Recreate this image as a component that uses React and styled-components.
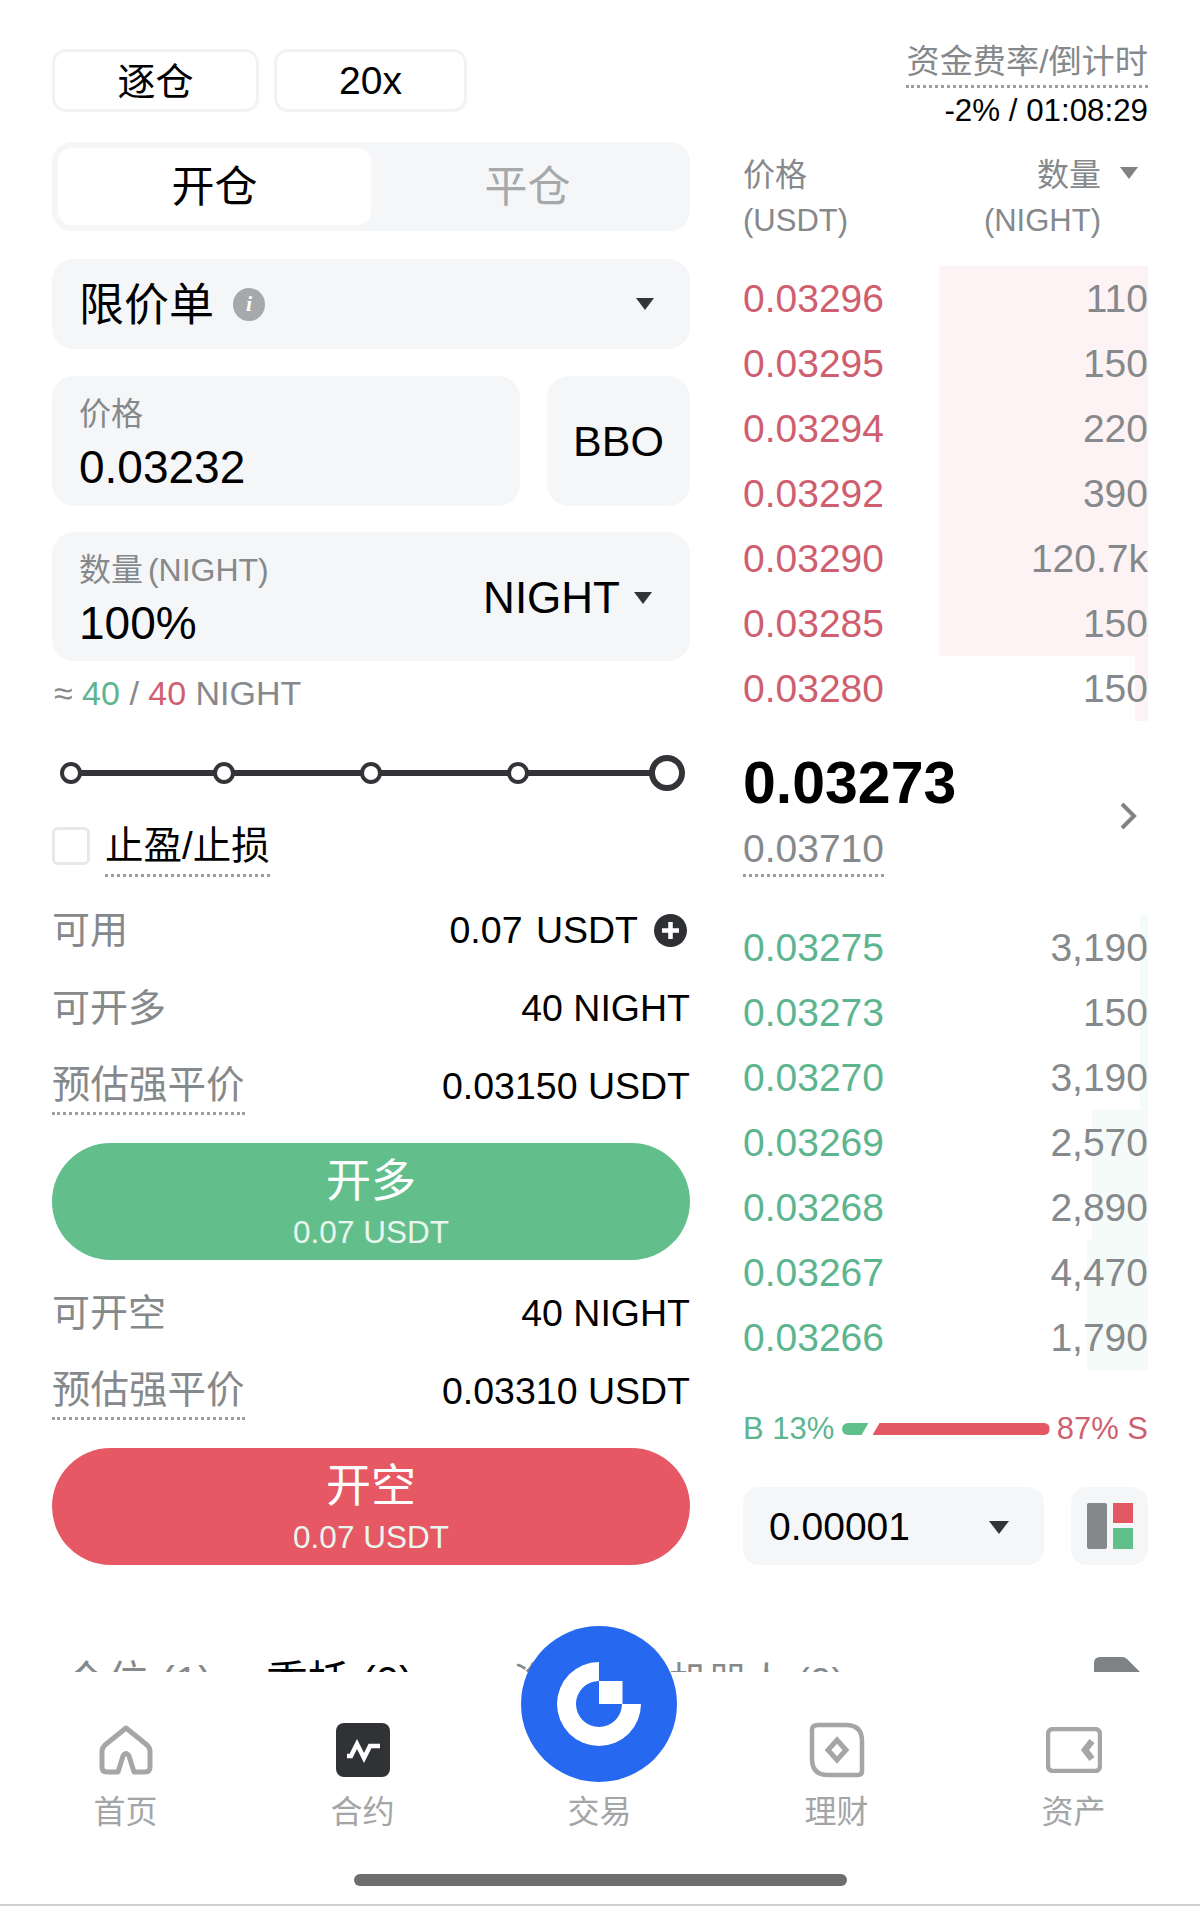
import React from 'react';
import styled, { createGlobalStyle } from 'styled-components';

const GRAY = '#86898b';
const RED = '#cf5f70';
const GREEN = '#5db58f';
const PANEL = '#f5f6f8';

const GlobalStyle = createGlobalStyle`
  html, body {
    margin: 0;
    padding: 0;
    background: #fff;
    font-family: "Liberation Sans", "Noto Sans CJK SC", sans-serif;
    color: #000;
  }
  * { box-sizing: border-box; }
`;

const Page = styled.div`
  width: 1200px;
  height: 1906px;
  overflow: hidden;
  display: flex;
  flex-direction: column;
  background: #fff;
`;

const Main = styled.div`
  height: 1655px;
  padding-left: 52px;
  display: flex;
  gap: 53px;
`;

const LeftColumn = styled.div`
  width: 638px;
  padding-top: 49px;
  display: flex;
  flex-direction: column;
`;

const RightColumn = styled.div`
  width: 405px;
  padding-top: 40px;
  display: flex;
  flex-direction: column;
`;

const TopButtons = styled.div`
  display: flex;
  gap: 15px;
`;

const OutlineButton = styled.div`
  width: ${p => p.$width}px;
  height: 63px;
  padding-bottom: ${p => p.$lift || 0}px;
  border: 3px solid #f0f2f3;
  border-radius: 14px;
  display: flex;
  align-items: center;
  justify-content: center;
  font-size: ${p => p.$size}px;
`;

const ModeTabs = styled.div`
  margin-top: 30px;
  height: 89px;
  padding: 6px;
  border-radius: 20px;
  background: ${PANEL};
  display: grid;
  grid-template-columns: 313px 1fr;
`;

const ModeTab = styled.div`
  padding-bottom: 7px;
  border-radius: 14px;
  display: flex;
  align-items: center;
  justify-content: center;
  font-size: 43px;
  background: ${p => (p.$active ? '#fff' : 'transparent')};
  color: ${p => (p.$active ? '#000' : '#a6a8aa')};
`;

const OrderType = styled.div`
  margin-top: 28px;
  height: 90px;
  padding: 0 36px 0 27px;
  border-radius: 22px;
  background: ${PANEL};
  display: flex;
  align-items: center;
  font-size: 45px;
`;

const OrderTypeName = styled.span`
  margin-bottom: 5px;
`;

const InfoDot = styled.span`
  width: 32px;
  height: 33px;
  margin-left: 19px;
  border-radius: 50%;
  background: #a6a8aa;
  color: #fff;
  font: italic 700 22px "Liberation Serif", serif;
  display: flex;
  align-items: center;
  justify-content: center;
`;

const Caret = styled.span`
  width: 0;
  height: 0;
  margin-left: ${p => p.$left || 0};
  border-left: ${p => p.$size || 9}px solid transparent;
  border-right: ${p => p.$size || 9}px solid transparent;
  border-top: ${p => (p.$size || 9) + 3}px solid ${p => p.$color || '#333438'};
`;

const PriceRow = styled.div`
  margin-top: 27px;
  height: 130px;
  display: flex;
  gap: 27px;
`;

const Field = styled.div`
  flex: ${p => (p.$fixed ? 'none' : 1)};
  height: ${p => p.$height || 130}px;
  margin-top: ${p => p.$top || 0}px;
  padding: 18px 38px 0 27px;
  border-radius: 22px;
  background: ${PANEL};
  display: flex;
  justify-content: space-between;
`;

const FieldText = styled.div`
  display: flex;
  flex-direction: column;
  gap: 5px;
`;

const FieldLabel = styled.div`
  height: 40px;
  line-height: 40px;
  font-size: 32px;
  word-spacing: -4px;
  color: ${GRAY};
`;

const FieldValue = styled.div`
  height: 56px;
  line-height: 56px;
  font-size: 46px;
`;

const UnitPicker = styled.div`
  height: 96px;
  display: flex;
  align-items: center;
  font-size: 44px;
`;

const BboButton = styled.div`
  width: 143px;
  border-radius: 22px;
  background: ${PANEL};
  display: flex;
  align-items: center;
  justify-content: center;
  font-size: 43px;
`;

const Estimate = styled.div`
  margin-top: 12px;
  padding-left: 2px;
  height: 40px;
  line-height: 40px;
  font-size: 34px;
  color: ${GRAY};
`;

const Tone = styled.span`
  color: ${p => (p.$tone === 'red' ? RED : p.$tone === 'green' ? GREEN : 'inherit')};
`;

const Slider = styled.div`
  position: relative;
  margin-top: 42px;
  margin-left: 8px;
  height: 36px;
  display: flex;
  align-items: center;
`;

const SliderTrack = styled.div`
  position: absolute;
  left: 8px;
  right: 30px;
  top: 15px;
  height: 6px;
  background: #333438;
`;

const SliderStop = styled.div`
  position: relative;
  flex: none;
  width: ${p => (p.$big ? 36 : 22)}px;
  height: ${p => (p.$big ? 36 : 22)}px;
  margin-left: ${p => p.$gap}px;
  border: ${p => (p.$big ? 6 : 4)}px solid #333438;
  border-radius: 50%;
  background: #fff;
`;

const StopLossRow = styled.div`
  margin-top: 36px;
  height: 38px;
  display: flex;
  align-items: center;
  gap: 15px;
`;

const Checkbox = styled.div`
  width: 38px;
  height: 38px;
  border: 3px solid #e7e8e9;
  border-radius: 6px;
`;

const Dotted = styled.span`
  display: inline-block;
  margin-top: ${p => p.$top || 0}px;
  font-size: ${p => p.$size || 38.5}px;
  line-height: ${p => p.$line || 44}px;
  padding-bottom: ${p => p.$pad ?? 5}px;
  color: ${p => p.$color || 'inherit'};
  border-bottom: 3px dotted #9b9d9f;
`;

const InfoRows = styled.div`
  margin-top: ${p => p.$top}px;
  display: flex;
  flex-direction: column;
  gap: 28px;
`;

const InfoRow = styled.div`
  height: 50px;
  display: flex;
  align-items: center;
  justify-content: space-between;
`;

const InfoLabel = styled.span`
  padding-bottom: 8px;
  font-size: 38px;
  color: ${GRAY};
`;

const InfoValue = styled.span`
  display: flex;
  align-items: center;
  font-size: 37.5px;
  white-space: pre;
`;

const WideSpaced = styled.span`
  word-spacing: 3px;
`;

const PlusDot = styled.span`
  width: 33px;
  height: 33px;
  margin: 0 3px 0 16px;
  border-radius: 50%;
  background: #2e3033;
  display: flex;
`;

const ActionButton = styled.div`
  margin-top: 32px;
  height: 117px;
  border-radius: 59px;
  background: ${p => p.$color};
  color: #fff;
  display: flex;
  flex-direction: column;
  align-items: center;
  padding-top: 14px;
`;

const ActionTitle = styled.div`
  font-size: 45px;
  line-height: 50px;
`;

const ActionAmount = styled.div`
  margin-top: 5px;
  font-size: 31.5px;
  line-height: 40px;
  color: #e8f6ef;
`;

const FundingLabel = styled.div`
  align-self: flex-end;
`;

const FundingValue = styled.div`
  align-self: flex-end;
  height: 40px;
  line-height: 40px;
  margin-top: 3px;
  font-size: 31.3px;
`;

const BookHeader = styled.div`
  margin-top: 22px;
  height: 88px;
  display: flex;
  justify-content: space-between;
  font-size: 32px;
  line-height: 45px;
  color: ${GRAY};
`;

const HeaderUnit = styled.span`
  font-size: 31px;
`;

const HeaderRight = styled.div`
  display: flex;
  gap: 19px;
  padding-right: 10px;
  text-align: right;
`;

const HeaderCaret = styled.div`
  padding-top: 22px;
`;

const BookRows = styled.div`
  margin-top: ${p => p.$top}px;
`;

const BookRow = styled.div`
  height: 65px;
  padding-top: 1px;
  display: flex;
  align-items: center;
  justify-content: space-between;
  font-size: 39px;
  color: ${GRAY};
  background: linear-gradient(to left, ${p => p.$bar} ${p => p.$depth}px, transparent ${p => p.$depth}px);
`;

const MidBlock = styled.div`
  margin-top: 27px;
  display: flex;
  justify-content: space-between;
  align-items: center;
`;

const MidPrice = styled.div`
  height: 70px;
  line-height: 70px;
  font-size: 59px;
  font-weight: 700;
  margin-bottom: 9px;
`;

const Chevron = styled.svg`
  width: 18px;
  height: 28px;
  margin: 7px 11px 0 0;
`;

const RatioRow = styled.div`
  margin-top: 39px;
  height: 40px;
  display: flex;
  align-items: center;
  justify-content: space-between;
  font-size: 31px;
`;

const RatioBar = styled.div`
  display: flex;
  gap: 4px;
`;

const RatioBuy = styled.div`
  width: 27px;
  height: 12px;
  background: #60bf8a;
  border-radius: 6px 0 0 6px;
  clip-path: polygon(0 0, 100% 0, calc(100% - 7px) 100%, 0 100%);
`;

const RatioSell = styled.div`
  width: 177px;
  height: 12px;
  background: #e45864;
  border-radius: 0 6px 6px 0;
  clip-path: polygon(7px 0, 100% 0, 100% 100%, 0 100%);
`;

const BookFooter = styled.div`
  margin-top: 38px;
  display: flex;
  justify-content: space-between;
`;

const PrecisionSelect = styled.div`
  width: 301px;
  height: 78px;
  padding: 2px 35px 0 26px;
  border-radius: 16px;
  background: ${PANEL};
  display: flex;
  align-items: center;
  justify-content: space-between;
  font-size: 39px;
`;

const LayoutButton = styled.div`
  width: 77px;
  height: 78px;
  border-radius: 16px;
  background: ${PANEL};
  display: flex;
  align-items: center;
  justify-content: center;
`;

const OrderTabs = styled.div`
  height: 17px;
  overflow: hidden;
  padding: 0 60px 0 65px;
  display: flex;
  line-height: 54px;
  white-space: pre;
`;

const OrderTab = styled.div`
  margin-right: ${p => p.$after}px;
  font-size: ${p => p.$size || 42}px;
  color: ${p => (p.$active ? '#000' : GRAY)};
`;

const DocIcon = styled.svg`
  width: 46px;
  height: 15px;
  margin: 2px 0 0 auto;
`;

const Nav = styled.nav`
  height: 234px;
  padding: 50px 8px 0 7px;
  background: #fff;
  border-bottom: 2px solid #d0d0d0;
`;

const NavItems = styled.div`
  display: grid;
  grid-template-columns: repeat(5, 237px);
`;

const NavItem = styled.div`
  position: relative;
  display: flex;
  flex-direction: column;
  align-items: center;
`;

const NavIcon = styled.div`
  width: 56px;
  height: 56px;
  display: flex;
  align-items: center;
  justify-content: center;
`;

const NavLabel = styled.div`
  margin-top: 12px;
  height: 44px;
  line-height: 44px;
  font-size: 32px;
  color: #a3a5a7;
`;

const TradeLogo = styled.svg`
  position: absolute;
  top: -96px;
  left: 40px;
  width: 156px;
  height: 156px;
`;

const HomeIndicator = styled.div`
  width: 493px;
  height: 12px;
  margin: 40px 0 0 347px;
  border-radius: 6px;
  background: #6e6e6e;
`;

const asks = [
  ['0.03296', '110', 209],
  ['0.03295', '150', 209],
  ['0.03294', '220', 209],
  ['0.03292', '390', 209],
  ['0.03290', '120.7k', 209],
  ['0.03285', '150', 209],
  ['0.03280', '150', 13],
];

const bids = [
  ['0.03275', '3,190', 8],
  ['0.03273', '150', 8],
  ['0.03270', '3,190', 8],
  ['0.03269', '2,570', 56],
  ['0.03268', '2,890', 56],
  ['0.03267', '4,470', 61],
  ['0.03266', '1,790', 61],
];

const stops = [
  { gap: 0 },
  { gap: 131 },
  { gap: 125 },
  { gap: 125 },
  { gap: 120, big: true },
];

const HomeGlyph = () => (
  <svg width="54" height="50" viewBox="0 0 54 50" fill="none" stroke="#a4a6a8" strokeWidth="5" strokeLinejoin="round">
    <path d="M27 3 L48 20 Q51 23 51 26 V42 Q51 47 46 47 H35 L30 31 Q27 26 24 31 L19 47 H8 Q3 47 3 42 V26 Q3 23 6 20 Z" />
  </svg>
);

const ContractGlyph = () => (
  <svg width="54" height="54" viewBox="0 0 54 54">
    <rect width="54" height="54" rx="8" fill="#313236" />
    <path d="M11 33 H15 L21 21 L28 35 L34 23 H44" fill="none" stroke="#fff" strokeWidth="4.5" />
  </svg>
);

const WealthGlyph = () => (
  <svg width="56" height="56" viewBox="0 0 56 56" fill="none" stroke="#a4a6a8" strokeWidth="4.5">
    <path d="M9 3 H37 Q53 3 53 19 V49 Q53 53 49 53 H19 Q3 53 3 37 V8 Q3 3 9 3 Z" />
    <path d="M28 18 L37 28 L28 38 L19 28 Z" strokeWidth="5" />
  </svg>
);

const AssetGlyph = () => (
  <svg width="56" height="46" viewBox="0 0 56 46" fill="none" stroke="#a4a6a8" strokeWidth="4.5">
    <rect x="2" y="2" width="52" height="42" rx="5" />
    <path d="M46 14 L39 23 L46 32" strokeWidth="6.5" />
  </svg>
);

const LayoutGlyph = () => (
  <svg width="46" height="46" viewBox="0 0 46 46">
    <rect x="0" y="0" width="20" height="46" rx="2" fill="#85888a" />
    <rect x="26" y="0" width="20" height="20" fill="#e45864" />
    <rect x="26" y="25" width="20" height="21" fill="#60bf8a" />
  </svg>
);

function LiquidationRows({ top, rows }) {
  return (
    <InfoRows $top={top}>
      {rows.map(([label, value]) => (
        <InfoRow key={label}>
          {label === '预估强平价'
            ? <Dotted $color={GRAY} $top={5}>{label}</Dotted>
            : <InfoLabel>{label}</InfoLabel>}
          <InfoValue>{value}</InfoValue>
        </InfoRow>
      ))}
    </InfoRows>
  );
}

export default function App() {
  return (
    <Page>
      <GlobalStyle />
      <Main>
        <LeftColumn>
          <TopButtons>
            <OutlineButton $width={207} $size={38} $lift={5}>逐仓</OutlineButton>
            <OutlineButton $width={193} $size={39}>20x</OutlineButton>
          </TopButtons>

          <ModeTabs>
            <ModeTab $active>开仓</ModeTab>
            <ModeTab>平仓</ModeTab>
          </ModeTabs>

          <OrderType>
            <OrderTypeName>限价单</OrderTypeName>
            <InfoDot>i</InfoDot>
            <Caret $left="auto" />
          </OrderType>

          <PriceRow>
            <Field>
              <FieldText>
                <FieldLabel>价格</FieldLabel>
                <FieldValue>0.03232</FieldValue>
              </FieldText>
            </Field>
            <BboButton>BBO</BboButton>
          </PriceRow>

          <Field $top={26} $height={129} $fixed>
            <FieldText>
              <FieldLabel>数量 (NIGHT)</FieldLabel>
              <FieldValue>100%</FieldValue>
            </FieldText>
            <UnitPicker>
              NIGHT
              <Caret $left="14px" />
            </UnitPicker>
          </Field>

          <Estimate>
            ≈ <Tone $tone="green">40</Tone> / <Tone $tone="red">40</Tone> NIGHT
          </Estimate>

          <Slider>
            <SliderTrack />
            {stops.map((stop, i) => (
              <SliderStop key={i} $gap={stop.gap} $big={stop.big} />
            ))}
          </Slider>

          <StopLossRow>
            <Checkbox />
            <Dotted $pad={6} $top={9}>止盈/止损</Dotted>
          </StopLossRow>

          <InfoRows $top={40}>
            <InfoRow>
              <InfoLabel>可用</InfoLabel>
              <InfoValue>
                <WideSpaced>0.07 USDT</WideSpaced>
                <PlusDot>
                  <svg width="33" height="33" viewBox="0 0 33 33">
                    <path d="M16.5 8 V25 M8 16.5 H25" stroke="#fff" strokeWidth="4.5" />
                  </svg>
                </PlusDot>
              </InfoValue>
            </InfoRow>
            <InfoRow>
              <InfoLabel>可开多</InfoLabel>
              <InfoValue>40 NIGHT</InfoValue>
            </InfoRow>
            <InfoRow>
              <Dotted $color={GRAY} $top={5}>预估强平价</Dotted>
              <InfoValue>0.03150 USDT</InfoValue>
            </InfoRow>
          </InfoRows>

          <ActionButton $color="#62bf8b">
            <ActionTitle>开多</ActionTitle>
            <ActionAmount>0.07 USDT</ActionAmount>
          </ActionButton>

          <LiquidationRows
            top={28}
            rows={[['可开空', '40 NIGHT'], ['预估强平价', '0.03310 USDT']]}
          />

          <ActionButton $color="#e55864">
            <ActionTitle>开空</ActionTitle>
            <ActionAmount>0.07 USDT</ActionAmount>
          </ActionButton>
        </LeftColumn>

        <RightColumn>
          <FundingLabel>
            <Dotted $size={33.2} $pad={1} $color={GRAY}>资金费率/倒计时</Dotted>
          </FundingLabel>
          <FundingValue>-2% / 01:08:29</FundingValue>

          <BookHeader>
            <div>价格<br /><HeaderUnit>(USDT)</HeaderUnit></div>
            <HeaderRight>
              <div>数量<br /><HeaderUnit>(NIGHT)</HeaderUnit></div>
              <HeaderCaret><Caret $size={9} $color="#808284" /></HeaderCaret>
            </HeaderRight>
          </BookHeader>

          <BookRows $top={25}>
            {asks.map(([price, size, depth]) => (
              <BookRow key={price} $bar="#fdf3f4" $depth={depth}>
                <Tone $tone="red">{price}</Tone>
                <span>{size}</span>
              </BookRow>
            ))}
          </BookRows>

          <MidBlock>
            <div>
              <MidPrice>0.03273</MidPrice>
              <Dotted $pad={3} $size={39} $color={GRAY}>0.03710</Dotted>
            </div>
            <Chevron viewBox="0 0 18 28" fill="none" stroke="#808284" strokeWidth="4">
              <path d="M3 2 L15 14 L3 26" />
            </Chevron>
          </MidBlock>

          <BookRows $top={38}>
            {bids.map(([price, size, depth]) => (
              <BookRow key={price} $bar="#f5fbf8" $depth={depth}>
                <Tone $tone="green">{price}</Tone>
                <span>{size}</span>
              </BookRow>
            ))}
          </BookRows>

          <RatioRow>
            <Tone $tone="green">B 13%</Tone>
            <RatioBar>
              <RatioBuy />
              <RatioSell />
            </RatioBar>
            <Tone $tone="red">87% S</Tone>
          </RatioRow>

          <BookFooter>
            <PrecisionSelect>
              0.00001
              <Caret $size={10} />
            </PrecisionSelect>
            <LayoutButton><LayoutGlyph /></LayoutButton>
          </BookFooter>
        </RightColumn>
      </Main>

      <OrderTabs>
        <OrderTab $after={54}>仓位 (1)</OrderTab>
        <OrderTab $active $after={100}>委托 (0)</OrderTab>
        <OrderTab $after={0} $size={39}>资金跟单机器人 (0)</OrderTab>
        <DocIcon viewBox="0 0 46 15">
          <path d="M0 15 V6 Q0 0 6 0 H28 Q31 0 33 2 L46 15 Z" fill="#7f8285" />
        </DocIcon>
      </OrderTabs>

      <Nav>
        <NavItems>
          <NavItem>
            <NavIcon><HomeGlyph /></NavIcon>
            <NavLabel>首页</NavLabel>
          </NavItem>
          <NavItem>
            <NavIcon><ContractGlyph /></NavIcon>
            <NavLabel>合约</NavLabel>
          </NavItem>
          <NavItem>
            <TradeLogo viewBox="0 0 156 156">
              <circle cx="78" cy="78" r="78" fill="#2768f0" />
              <path d="M78 36 A42 42 0 1 0 120 78 H101 A23 23 0 1 1 78 55 Z" fill="#fff" />
              <rect x="78" y="55" width="23.5" height="23" fill="#fff" />
            </TradeLogo>
            <NavIcon />
            <NavLabel>交易</NavLabel>
          </NavItem>
          <NavItem>
            <NavIcon><WealthGlyph /></NavIcon>
            <NavLabel>理财</NavLabel>
          </NavItem>
          <NavItem>
            <NavIcon><AssetGlyph /></NavIcon>
            <NavLabel>资产</NavLabel>
          </NavItem>
        </NavItems>
        <HomeIndicator />
      </Nav>
    </Page>
  );
}
